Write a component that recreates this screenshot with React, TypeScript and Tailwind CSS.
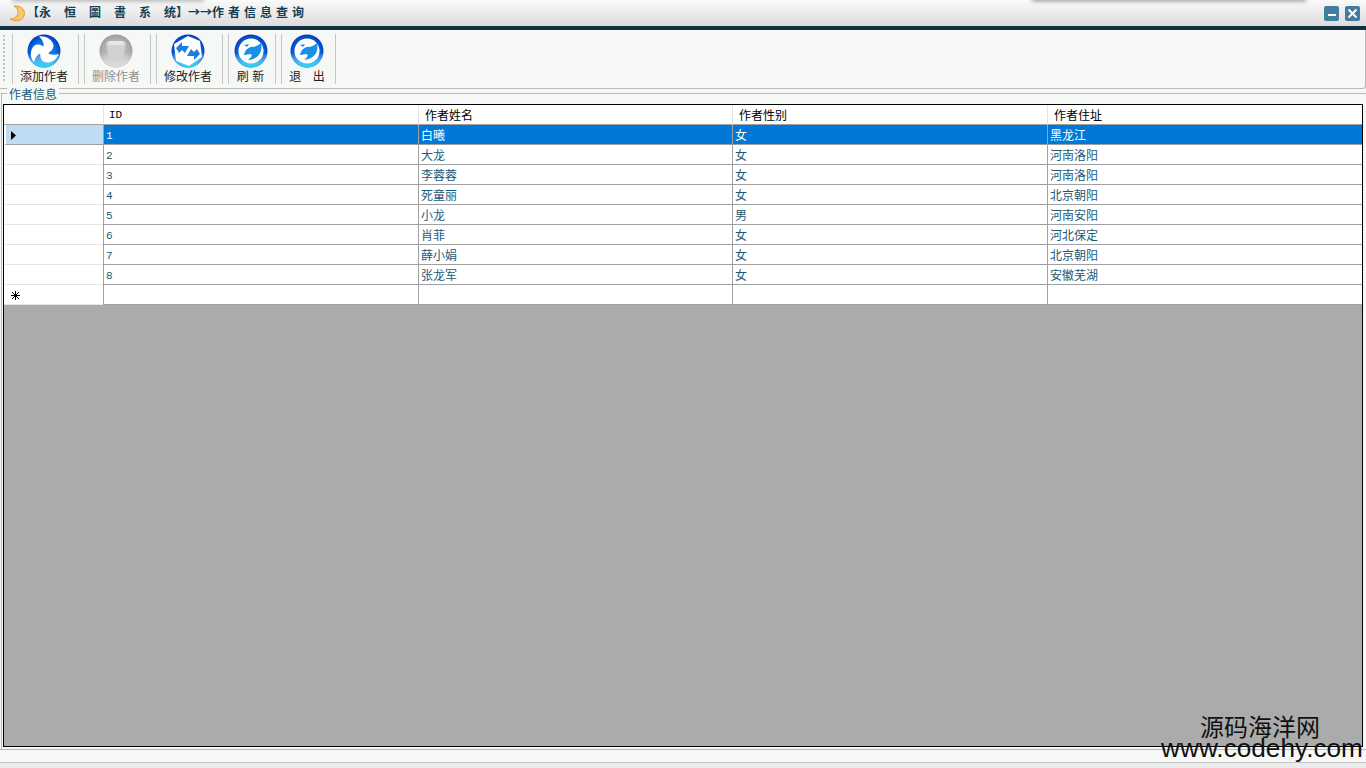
const rows = [
  ["1", "白曦", "女", "黑龙江"],
  ["2", "大龙", "女", "河南洛阳"],
  ["3", "李蓉蓉", "女", "河南洛阳"],
  ["4", "死童丽", "女", "北京朝阳"],
  ["5", "小龙", "男", "河南安阳"],
  ["6", "肖菲", "女", "河北保定"],
  ["7", "薛小娟", "女", "北京朝阳"],
  ["8", "张龙军", "女", "安徽芜湖"],
];

const gridCols = "grid grid-cols-[99px_315px_314px_315px_315px]";
const blade = "M14 18 C18 14 18 8 12 2.5 C19 1.5 26 6 26.5 12 C26.5 16 22 19 18 20 Z";

function Sphere({ id, gray, children }: { id: string; gray?: boolean; children: React.ReactNode }) {
  return (
    <svg width="34" height="34" viewBox="0 0 34 34">
      <defs>
        <radialGradient id={id} cx="50%" cy="55%" r="55%">
          <stop offset="0%" stopColor={gray ? "#c8c8c8" : "#1e90e8"} />
          <stop offset="65%" stopColor={gray ? "#b4b4b4" : "#0a6fe0"} />
          <stop offset="100%" stopColor={gray ? "#9c9c9c" : "#0636b8"} />
        </radialGradient>
        <linearGradient id={id + "b"} x1="0" y1="0" x2="0" y2="1">
          <stop offset="55%" stopColor="#ffffff" stopOpacity="0" />
          <stop offset="100%" stopColor={gray ? "#dcdcdc" : "#19d8f5"} />
        </linearGradient>
      </defs>
      <circle cx="17" cy="17" r="16.5" fill={`url(#${id})`} />
      <circle cx="17" cy="17" r="16.5" fill={`url(#${id}b)`} />
      {children}
    </svg>
  );
}

const Swirl = (id: string) => (
  <Sphere id={id}>
    <circle cx="17" cy="17" r="12.5" fill="#ffffff" />
    <path d="M27 9 C29 17 25 25 14 26 C18 23 18 21 17 20 L10 21 C11 16 15 12 20 13 C22 12 25 11 27 9 Z" fill="#1a8fe6" />
    <path d="M10 11 L15 10 L13 13 Z" fill="#1a8fe6" />
  </Sphere>
);

const tools = [
  {
    label: "添加作者",
    width: "w-[67px]",
    text: "text-[#222222]",
    icon: (
      <Sphere id="add">
        <g fill="#ffffff">
          <path d={blade} />
          <path d={blade} transform="rotate(120 17 17)" />
          <path d={blade} transform="rotate(240 17 17)" />
          <circle cx="17" cy="17" r="5" />
        </g>
      </Sphere>
    ),
  },
  {
    label: "删除作者",
    width: "w-[67px]",
    text: "text-[#8f8f8f]",
    icon: (
      <Sphere id="del" gray>
        <path d="M7 8 L27 8 L24 25 L20 27 L14 27 L10 25 Z" fill="#d2d2d2" />
        <path d="M9 7 H25 L24 11 H10 Z" fill="#e6e6e6" />
      </Sphere>
    ),
  },
  {
    label: "修改作者",
    width: "w-[67px]",
    text: "text-[#222222]",
    icon: (
      <Sphere id="edit">
        <path d="M17 2 L29 7 L31 23 L18 32 L5 27 L3 10 Z" fill="#ffffff" />
        <path d="M5 14 L11 8 L11 12 L18 12 L14 19 L11 16 L8 19 Z" fill="#1a80e0" />
        <path d="M29 20 L23 26 L23 22 L16 22 L20 15 L23 18 L26 15 Z" fill="#1a80e0" />
      </Sphere>
    ),
  },
  { label: "刷 新", width: "w-[48px]", text: "text-[#222222] [word-spacing:1px]", icon: Swirl("refresh") },
  { label: "退 出", width: "w-[55px]", text: "text-[#222222] [word-spacing:9px]", icon: Swirl("exit") },
];

export default function App() {
  return (
    <div className="relative flex h-[768px] w-[1366px] flex-col overflow-hidden bg-[#f6f8f5] font-['Noto_Sans_CJK_SC',sans-serif] text-[12px] leading-none">
      {/* title bar */}
      <div className="flex h-[26px] items-center bg-gradient-to-b from-[#fafafa] to-[#dcdcdc] pl-[8px] pr-[6px]">
        <svg width="18" height="18" viewBox="0 0 18 18">
          <path d="M6 2 C13 1 18 6 16 12 C14 17 7 18 2 15 C7 15 10 12 10 8 C10 5 8 3 6 2 Z" fill="#f2c877" stroke="#e89a30" strokeWidth="1" />
        </svg>
        <span className="mb-[2px] ml-[1px] flex items-center whitespace-pre font-bold text-[#123f55]">
          <span>【</span>
          <span className="tracking-[13px]">永恒圖書系</span>
          <span>统】</span>
          <span>→→</span>
          <span className="tracking-[4px]">作者信息查询</span>
        </span>
        <div className="ml-auto flex gap-[6px]">
          <div className="flex h-[15px] w-[15px] items-center justify-center rounded-[2px] bg-[#417e9d]">
            <div className="mt-[4px] h-[2px] w-[8px] bg-white" />
          </div>
          <div className="flex h-[15px] w-[15px] items-center justify-center rounded-[2px] bg-[#417e9d]">
            <svg width="11" height="11" viewBox="0 0 11 11">
              <path d="M1.5 1.5 L9.5 9.5 M9.5 1.5 L1.5 9.5" stroke="#ffffff" strokeWidth="2" />
            </svg>
          </div>
        </div>
      </div>
      <div className="h-[4px] bg-[#12303f]" />

      {/* toolbar */}
      <div className="flex h-[59px] items-start rounded-br-[3px] border-b border-r border-[#b9b9b9] pl-[3px] pt-[4px]">
        <div className="mt-[1px] h-[46px] w-[2px] border-l-2 border-dotted border-[#c4c4c4]" />
        <div className="ml-[7px] flex gap-[5px]">
          {tools.map((t) => (
            <div
              key={t.label}
              className={`flex h-[50px] flex-col items-center border-x border-[#c4c8c4] pr-[3px] ${t.width}`}
            >
              {t.icon}
              <span className={`mt-[2px] whitespace-pre ${t.text}`}>{t.label}</span>
            </div>
          ))}
        </div>
      </div>

      {/* group box */}
      <div className="relative ml-[1px] mt-[4px] flex flex-1 flex-col border-l border-t border-[#b9b9b9] pl-[1px] pr-[3px] pt-[10px]">
        <span className="absolute left-[5px] top-[-6px] bg-[#f6f8f5] px-[2px] text-[#1b5a75]">作者信息</span>
        <div className="flex h-[643px] flex-col border border-black bg-[#ababab]">
          {/* header row */}
          <div className={`${gridCols} h-[20px] bg-white text-black`}>
            <div className="border-b border-[#a0a0a0]" />
            <div className="flex items-center border-b border-l border-[#a0a0a0] border-l-[#e4e4e4] pl-[5px] pt-[2px] font-['Liberation_Mono',monospace] text-[11px]">
              ID
            </div>
            <div className="flex items-center border-b border-l border-[#a0a0a0] border-l-[#e4e4e4] pl-[6px]">作者姓名</div>
            <div className="flex items-center border-b border-l border-[#a0a0a0] border-l-[#e4e4e4] pl-[6px]">作者性别</div>
            <div className="flex items-center border-b border-l border-[#a0a0a0] border-l-[#e4e4e4] pl-[6px]">作者住址</div>
          </div>
          {rows.map((r, i) => {
            const selected = i === 0;
            const cell = `flex items-center border-b border-l border-[#a0a0a0] pl-[2px] ${
              selected ? "bg-[#0078d7] text-white" : "bg-white text-[#1b5a75]"
            }`;
            return (
              <div key={r[0]} className={`${gridCols} h-[20px]`}>
                <div
                  className={`flex items-center border-b pl-[5px] pt-[1px] ${
                    selected ? "border-l-2 border-[#a0a0a0] border-l-white bg-[#bfdcf3]" : "border-l-2 border-[#e4e4e4] border-l-white bg-white"
                  }`}
                >
                  {selected && (
                    <svg width="5" height="9" viewBox="0 0 5 9">
                      <path d="M0 0 L5 4.5 L0 9 Z" fill="#000000" />
                    </svg>
                  )}
                </div>
                <div className={`${cell} pt-[3px] font-['Liberation_Mono',monospace] text-[11px]`}>{r[0]}</div>
                <div className={cell}>{r[1]}</div>
                <div className={cell}>{r[2]}</div>
                <div className={cell}>{r[3]}</div>
              </div>
            );
          })}
          {/* new row */}
          <div className={`${gridCols} h-[20px] bg-white`}>
            <div className="flex items-center border-b border-[#e4e4e4] pl-[7px] pt-[1px]">
              <svg width="9" height="9" viewBox="0 0 9 9">
                <path d="M4.5 0 V9 M0 4.5 H9 M1 1 L8 8 M8 1 L1 8" stroke="#000000" strokeWidth="1" />
              </svg>
            </div>
            <div className="border-b border-l border-[#a0a0a0]" />
            <div className="border-b border-l border-[#a0a0a0]" />
            <div className="border-b border-l border-[#a0a0a0]" />
            <div className="border-b border-l border-[#a0a0a0]" />
          </div>
        </div>
      </div>

      {/* status bar */}
      <div className="h-[13px] border-t border-[#b9b9b9] bg-[#f6f8f5]" />
      <div className="h-[6px] border-t border-[#c4c4c4] bg-[#ececec]" />

      {/* shadows of a window behind, and the site watermark over everything */}
      <div className="absolute left-[1032px] top-[-4px] h-[4px] w-[274px] shadow-[0_1px_4px_rgba(0,0,0,0.45)]" />
      <div className="absolute left-[12px] top-[-4px] h-[4px] w-[192px] shadow-[0_1px_4px_rgba(0,0,0,0.35)]" />
      <div className="absolute left-[1160px] top-[713px] flex w-[204px] flex-col items-center text-[#111111]">
        <span className="ml-[-4px] text-[24px] leading-[25px]">源码海洋网</span>
        <span className="whitespace-nowrap font-['Liberation_Sans',sans-serif] text-[26.2px] leading-[21px]">www.codehy.com</span>
      </div>
    </div>
  );
}
